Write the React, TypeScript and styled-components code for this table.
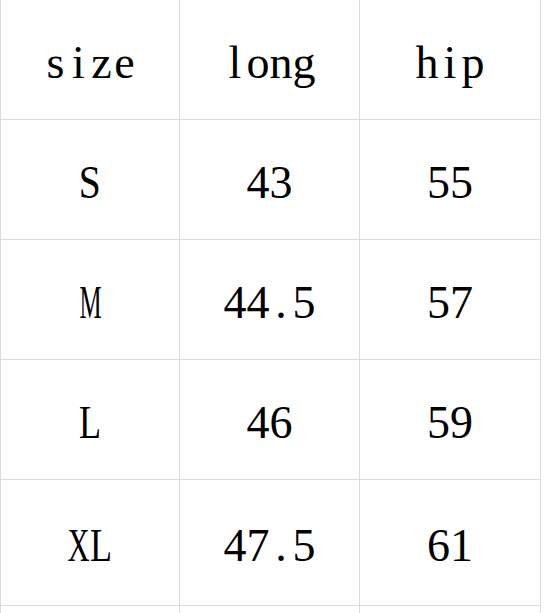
import { styled, createGlobalStyle } from "styled-components";

const GlobalStyle = createGlobalStyle`
  html, body {
    margin: 0;
    padding: 0;
    background: #ffffff;
  }
`;

const Page = styled.div`
  width: 544px;
  height: 613px;
  overflow: hidden;
  background: #ffffff;
`;

const Table = styled.div`
  display: grid;
  grid-template-columns: 180px 180px 181px;
  width: 541px;
`;

const Cell = styled.div<{ $tall?: boolean; $first?: boolean }>`
  display: flex;
  align-items: center;
  justify-content: center;
  box-sizing: border-box;
  height: ${(p) => (p.$tall ? "126px" : "120px")};
  border-right: 1px solid #dcdcdc;
  border-bottom: 1px solid #dcdcdc;
  border-left: ${(p) => (p.$first ? "1px solid #dcdcdc" : "none")};
  font-family: "Liberation Serif", "Noto Sans CJK SC", serif;
  font-size: 46px;
  color: #000000;
  padding-top: 6px;
`;

const Word = styled.span`
  display: flex;
`;

const Glyph = styled.span<{ $scale: number }>`
  display: flex;
  justify-content: center;
  width: 0.5em;
  white-space: pre;

  & > span {
    display: inline-block;
    flex: none;
    transform: scaleX(${(p) => p.$scale});
  }
`;

// Liberation Serif advance widths (em) for the wide capitals, so each one
// can be squeezed into a half-width monospace cell
const capWidths: Record<string, number> = {
  S: 0.556,
  M: 0.889,
  L: 0.611,
  X: 0.722,
};

const rows = [
  ["size", "long", "hip"],
  ["S", "43", "55"],
  ["M", "44.5", "57"],
  ["L", "46", "59"],
  ["XL", "47.5", "61"],
  ["", "", ""],
];

function Mono({ text }: { text: string }) {
  return (
    <Word>
      {text.split("").map((ch, i) => {
        const w = capWidths[ch];
        const scale = w ? Math.min(1, 0.48 / w) : 1;
        return (
          <Glyph key={i} $scale={scale}>
            <span>{ch}</span>
          </Glyph>
        );
      })}
    </Word>
  );
}

export default function App() {
  return (
    <Page>
      <GlobalStyle />
      <Table>
        {rows.map((row, r) =>
          row.map((text, c) => (
            <Cell key={`${r}-${c}`} $first={c === 0} $tall={r === 4}>
              <Mono text={text} />
            </Cell>
          ))
        )}
      </Table>
    </Page>
  );
}
